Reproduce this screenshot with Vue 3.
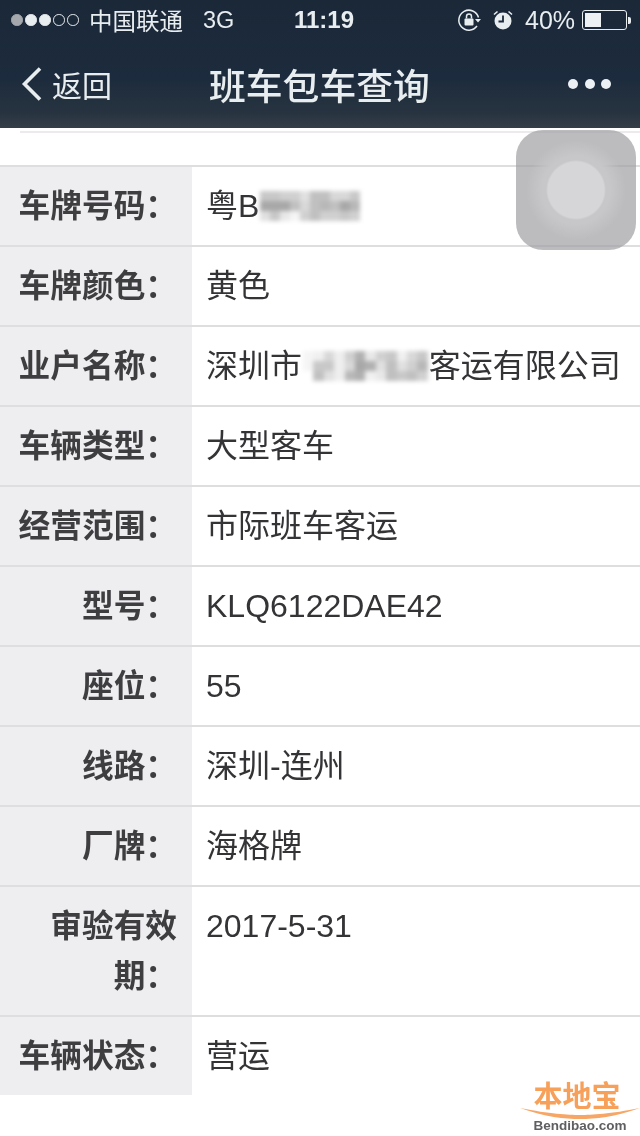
<script setup>
const shade = (rows) => rows.flat().map((v) => `#${v}${v}${v}`)
const plate = shade([
  ['c8', 'c8', 'd0', 'd0', 'e0', 'c0', 'c0', 'd8', 'd8', 'c8'],
  ['a8', 'a8', 'a8', 'c0', 'd8', 'c0', 'b8', 'c0', 'a8', 'b8'],
  ['e0', 'c8', 'e8', 'f5', 'd0', 'c0', 'd0', 'd0', 'c8', 'd0']
])
const company = shade([
  ['f5', 'f0', 'd8', 'ee', 'd0', 'b0', 'e8', 'd0', 'c8', 'f0', 'd8', 'c8'],
  ['f5', 'c8', 'c8', 'ee', 'd8', 'a8', 'b0', 'e0', 'c0', 'e0', 'd0', 'b8'],
  ['ff', 'c0', 'e0', 'ee', 'b8', 'b0', 'f0', 'e8', 'c0', 'c8', 'c0', 'd0']
])
const rows = [
  { label: '车牌号码：', mosaic: plate, cols: 10, cell: 10, before: '粤B' },
  { label: '车牌颜色：', value: '黄色' },
  { label: '业户名称：', mosaic: company, cols: 12, cell: 10.4, before: '深圳市', after: '客运有限公司' },
  { label: '车辆类型：', value: '大型客车' },
  { label: '经营范围：', value: '市际班车客运' },
  { label: '型号：', value: 'KLQ6122DAE42' },
  { label: '座位：', value: '55' },
  { label: '线路：', value: '深圳-连州' },
  { label: '厂牌：', value: '海格牌' },
  { label: '审验有效期：', value: '2017-5-31' },
  { label: '车辆状态：', value: '营运' }
]
</script>

<template>
  <div class="page">
    <header class="top">
      <div class="status">
        <div class="signal">
          <i class="dot on faded"></i><i class="dot on"></i><i class="dot on"></i><i class="dot"></i><i class="dot"></i>
        </div>
        <span class="carrier">中国联通</span>
        <span class="net">3G</span>
        <span class="time">11:19</span>
        <svg class="lock" width="24" height="24" viewBox="0 0 24 24">
          <path d="M21.5 9.5A10 10 0 1 0 20 18" fill="none" stroke="#e8edf0" stroke-width="1.5"/>
          <path d="M18 11h6l-3 3.5z" fill="#e8edf0"/>
          <rect x="7.5" y="10.5" width="9" height="7" rx="1" fill="#e8edf0"/>
          <path d="M9.5 10.5V8.5a2.5 2.5 0 0 1 5 0v2" fill="none" stroke="#e8edf0" stroke-width="1.5"/>
        </svg>
        <svg class="alarm" width="20" height="20" viewBox="0 0 20 20">
          <circle cx="10" cy="11" r="8.5" fill="#e8edf0"/>
          <path d="M10 5.5V11.5H5.5" fill="none" stroke="#1c2a3b" stroke-width="1.8"/>
          <path d="M1 4.5 4.5 1.5M19 4.5 15.500 1.500" stroke="#e8edf0" stroke-width="1.6"/>
        </svg>
        <span class="pct">40%</span>
        <div class="battery"><i class="level"></i></div>
        <i class="nub"></i>
      </div>
      <nav class="nav">
        <svg class="chev" width="22" height="36" viewBox="0 0 22 36">
          <path d="M19 2.500 3.500 18 19 33.500" fill="none" stroke="#e8edf0" stroke-width="3.600"/>
        </svg>
        <span class="back">返回</span>
        <span class="title">班车包车查询</span>
        <div class="more"><i></i><i></i><i></i></div>
      </nav>
    </header>

    <div class="spacer"><div class="rule"></div></div>

    <main class="table">
      <div v-for="row in rows" :key="row.label" class="row">
        <div class="label">{{ row.label }}</div>
        <div class="value">
          <template v-if="row.mosaic">
            <span>{{ row.before }}</span>
            <span class="mosaic" :style="{ gridTemplateColumns: `repeat(${row.cols}, ${row.cell}px)` }">
              <i v-for="(cell, n) in row.mosaic" :key="n" :style="{ background: cell }"></i>
            </span>
            <span v-if="row.after">{{ row.after }}</span>
          </template>
          <template v-else>{{ row.value }}</template>
        </div>
      </div>
    </main>

    <div class="assist"><div class="knob"></div></div>

    <div class="logo">
      <div class="logo-cn">本地宝</div>
      <svg class="swoosh" width="120" height="12" viewBox="0 0 120 12">
        <path d="M0 1C30 7 48 8 60 8S90 7 120 1C95 10 75 12 60 12S25 10 0 1Z" fill="#f7a665"/>
      </svg>
      <div class="logo-en">Bendibao.com</div>
    </div>
  </div>
</template>

<style scoped>
.page {
  position: relative;
  width: 640px;
  height: 1136px;
  overflow: hidden;
  background: #fff;
  font-family: "Liberation Sans", "Noto Sans CJK SC", sans-serif;
  color: #343336;
  filter: blur(0.35px);
}
.top {
  height: 128px;
  background: linear-gradient(180deg, #1b2838 0%, #1c2b3d 60%, #27333f 88%, #343e49 100%);
  color: #e8edf0;
}
.status {
  height: 40px;
  display: flex;
  align-items: center;
  padding-left: 11px;
  font-size: 23.500px;
}
.signal { display: flex; gap: 2.500px; width: 78px; }
.dot {
  width: 11.500px;
  height: 11.500px;
  box-sizing: border-box;
  border: 1px solid #e8edf0;
  border-radius: 50%;
}
.dot.on { background: #e8edf0; }
.dot.faded { background: #a5a8ad; border-color: #a5a8ad; }
.carrier { width: 114px; }
.net { width: 91px; }
.time { width: 163px; font-size: 24px; font-weight: 700; }
.lock { margin-right: 12px; }
.alarm { margin-right: 12px; }
.pct { width: 57px; font-size: 25px; }
.battery {
  box-sizing: border-box;
  width: 45px;
  height: 20px;
  border: 1px solid #e8edf0;
  border-radius: 3px;
  padding: 2px;
}
.level { display: block; width: 16px; height: 100%; background: #eef1f3; }
.nub { width: 3px; height: 7px; margin-left: 1px; background: #e8edf0; border-radius: 0 2px 2px 0; }
.nav {
  height: 88px;
  display: flex;
  align-items: center;
  padding-left: 21px;
}
.chev { width: 22px; margin-right: 9px; }
.back { width: 157px; font-size: 30px; }
.title { width: 222px; font-size: 36.800px; font-weight: 500; white-space: nowrap; }
.more { display: flex; gap: 6.500px; margin-left: 137px; }
.more i { width: 10px; height: 10px; background: #eef1f4; border-radius: 50%; }
.spacer { height: 37px; box-sizing: border-box; padding: 3px 0 0 20px; }
.rule { height: 2px; background: #eceaed; }
.table { border-top: 2px solid #dfdde0; }
.row {
  display: flex;
  border-bottom: 2px solid #dfdde0;
}
.row:last-child { border-bottom: 0; }
.label {
  box-sizing: border-box;
  width: 192px;
  flex: none;
  padding: 14px 15px 14px 16px;
  background: #eeedf0;
  font-size: 31.700px;
  font-weight: 700;
  line-height: 50px;
  text-align: right;
  color: #3e3d40;
}
.value {
  padding: 14px 0 14px 14px;
  font-size: 32px;
  line-height: 50px;
  white-space: nowrap;
  display: flex;
  align-items: flex-start;
  height: 50px;
}
.mosaic {
  display: grid;
  grid-auto-rows: 10px;
  margin: 10px 1px 0 1px;
  filter: blur(2px);
}
.assist {
  position: absolute;
  left: 516px;
  top: 130px;
  width: 120px;
  height: 120px;
  border-radius: 27px;
  background: rgba(160, 158, 163, 0.7);
  display: flex;
  align-items: center;
  justify-content: center;
}
.knob {
  width: 100px;
  height: 100px;
  border-radius: 50%;
  background: radial-gradient(circle closest-side, #d6d5d7 0 56%, #c7c6c8 60%, #c7c6c8 68%, rgba(197, 196, 198, 0) 100%);
}
.logo {
  position: absolute;
  left: 520px;
  top: 1079px;
  width: 120px;
  height: 54px;
  text-align: center;
}
.logo-cn {
  padding: 3px 6px 0 0;
  font-size: 29px;
  line-height: 30px;
  font-weight: 700;
  color: #f7a05a;
}
.swoosh { display: block; margin-top: -5px; }
.logo-en {
  font-size: 13.500px;
  line-height: 13px;
  font-weight: 700;
  color: #5f5f62;
}
</style>
